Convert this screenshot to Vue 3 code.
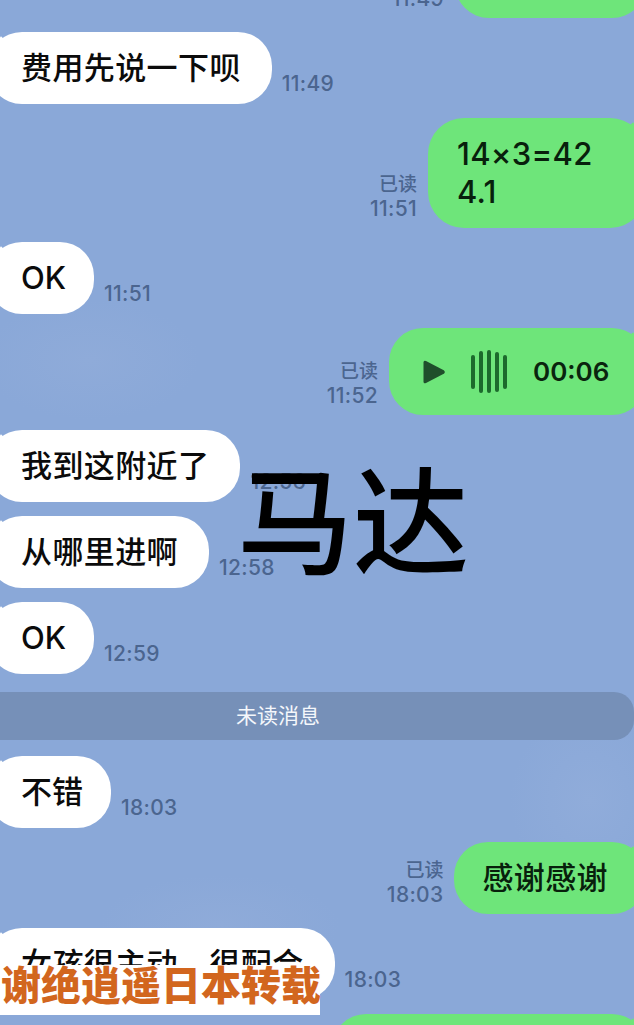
<script setup>
const rowsTop = [
  { id: 1, text: '费用先说一下呗', time: '11:49' }
]
const bars = [34, 42, 43, 40, 34]
</script>

<template>
  <div class="page">
    <div class="chat">
      <div class="row right">
        <div class="meta"><span class="read">已读</span><span>11:49</span></div>
        <div class="bubble green first-green"></div>
      </div>

      <div class="row" v-for="m in rowsTop" :key="m.id">
        <div class="bubble white">{{ m.text }}</div>
        <span class="time">{{ m.time }}</span>
      </div>

      <div class="row right">
        <div class="meta"><span class="read">已读</span><span>11:51</span></div>
        <div class="bubble green calc">14×3=42<br />4.1</div>
      </div>

      <div class="row">
        <div class="bubble white short">OK</div>
        <span class="time">11:51</span>
      </div>

      <div class="row right voice-row">
        <div class="meta"><span class="read">已读</span><span>11:52</span></div>
        <div class="bubble green voice">
          <svg class="play" width="24" height="26" viewBox="0 0 24 26">
            <path d="M1.5 3.5 Q1.5 0.8 4 2 L21.8 11.2 Q23.8 13 21.8 14.8 L4 24 Q1.5 25.2 1.5 22.5 Z" fill="#1f4f2b" />
          </svg>
          <div class="wave">
            <i v-for="(h, i) in bars" :key="i" :style="{ height: h + 'px' }"></i>
          </div>
          <span class="duration">00:06</span>
        </div>
      </div>

      <div class="row">
        <div class="bubble white">我到这附近了</div>
        <span class="time">12:56</span>
      </div>
      <div class="row">
        <div class="bubble white">从哪里进啊</div>
        <span class="time">12:58</span>
      </div>
      <div class="row">
        <div class="bubble white short">OK</div>
        <span class="time">12:59</span>
      </div>

      <div class="unread">未读消息</div>

      <div class="row">
        <div class="bubble white short">不错</div>
        <span class="time">18:03</span>
      </div>

      <div class="row right">
        <div class="meta"><span class="read">已读</span><span>18:03</span></div>
        <div class="bubble green thanks">感谢感谢</div>
      </div>

      <div class="row">
        <div class="bubble white">女孩很主动，很配合</div>
        <span class="time">18:03</span>
      </div>

      <div class="row right">
        <div class="bubble green last-green"></div>
      </div>
    </div>

    <div class="stamp">马达</div>
    <div class="watermark">谢绝逍遥日本转载</div>
  </div>
</template>

<style>
html,
body {
  margin: 0;
  background: #8aa8d8;
}
</style>

<style scoped>
.page {
  position: relative;
  width: 634px;
  height: 1025px;
  overflow: hidden;
  font-family: 'Inter', 'Noto Sans CJK SC', sans-serif;
  background-color: #8aa8d8;
  background-image:
    radial-gradient(ellipse 110px 60px at 90px 360px, #8fabd9 0%, rgba(143, 171, 217, 0) 100%),
    radial-gradient(ellipse 80px 90px at 590px 800px, #90acda 0%, rgba(144, 172, 218, 0) 100%),
    radial-gradient(ellipse 120px 50px at 220px 925px, #8fabd9 0%, rgba(143, 171, 217, 0) 100%);
}

.chat {
  display: flex;
  flex-direction: column;
  gap: 14px;
  margin-top: -54px;
}

.row {
  display: flex;
  align-items: flex-end;
  gap: 10px;
}

.row.right {
  justify-content: flex-end;
  gap: 11px;
}

.bubble {
  position: relative;
  box-sizing: border-box;
  min-height: 72px;
  padding: 17px 31px 17px 33px;
  border-radius: 34px;
  font-size: 31px;
  font-weight: 500;
  line-height: 38px;
  letter-spacing: 0.4px;
  color: #0b0b0b;
  white-space: nowrap;
}

.white {
  margin-left: -12px;
  background: #fff;
}

.white.short {
  padding-right: 28px;
  letter-spacing: 0;
}

.white::before {
  content: '';
  position: absolute;
  left: 9px;
  top: 6px;
  width: 8px;
  height: 8px;
  background: #fff;
  transform: rotate(45deg);
}

.green {
  margin-right: -12px;
  padding: 17px 40px 17px 28px;
  background: #6ee57a;
  color: #08200c;
}

.green::before {
  content: '';
  position: absolute;
  right: 9px;
  top: 6px;
  width: 8px;
  height: 8px;
  background: #6ee57a;
  transform: rotate(45deg);
}

.thanks {
  padding-right: 38px;
}

.first-green {
  width: 191px;
}

.last-green {
  width: 314px;
  height: 72px;
}

.calc {
  width: 218px;
  height: 110px;
  padding-left: 29px;
  letter-spacing: 0.3px;
  border-radius: 36px;
}

.voice {
  display: flex;
  align-items: center;
  width: 257px;
  height: 87px;
  padding: 0 0 0 33px;
}

.play {
  flex: none;
}

.wave {
  display: flex;
  align-items: center;
  gap: 4px;
  margin-left: 25px;
}

.wave i {
  display: block;
  width: 4px;
  border-radius: 2px;
  background: #1c6a2c;
}

.duration {
  margin-left: 26px;
  font-size: 26px;
  font-weight: 600;
  letter-spacing: 0;
  color: #0a240e;
}

.time {
  margin-bottom: 8px;
  font-size: 21px;
  font-weight: 500;
  letter-spacing: 0.3px;
  line-height: 24px;
  color: #4b658f;
}

.meta {
  display: flex;
  flex-direction: column;
  align-items: flex-end;
  margin-bottom: 7px;
  font-size: 21px;
  font-weight: 500;
  letter-spacing: 0.3px;
  line-height: 24px;
  color: #4b658f;
}

.read {
  font-size: 19px;
  letter-spacing: 0;
}

.unread {
  height: 48px;
  margin: 4px 0 2px -78px;
  border-radius: 0 20px 20px 0;
  background: #7690b8;
  color: #f4f7fb;
  font-size: 21px;
  line-height: 48px;
  text-align: center;
}

.voice-row {
  margin-bottom: 1px;
}

.stamp {
  position: absolute;
  left: 237px;
  top: 439px;
  font-family: 'Noto Sans CJK SC', sans-serif;
  font-size: 116px;
  font-weight: 500;
  line-height: 150px;
  color: #000;
}

.watermark {
  position: absolute;
  left: 0;
  top: 965px;
  box-sizing: border-box;
  width: 320px;
  height: 50px;
  padding-left: 1px;
  background: #fff;
  font-family: 'Noto Sans CJK SC', sans-serif;
  font-size: 40px;
  font-weight: 900;
  line-height: 37px;
  white-space: nowrap;
  color: #d2661e;
}
</style>
